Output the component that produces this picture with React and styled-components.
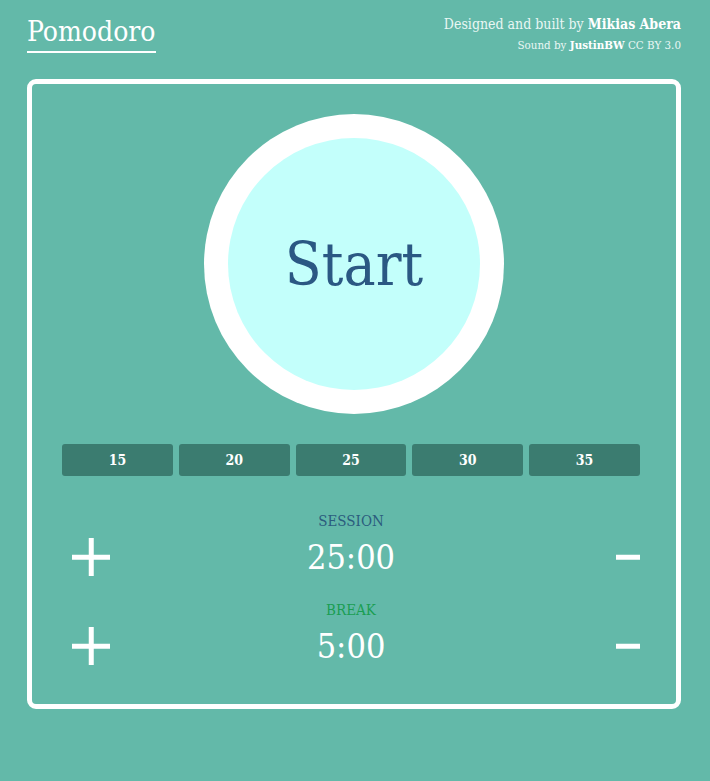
import React, { useState } from 'react';
import styled, { createGlobalStyle } from 'styled-components';

const GlobalStyle = createGlobalStyle`
  html, body {
    margin: 0;
    padding: 0;
    background: #63b9a9;
  }
  body {
    font-family: 'DejaVu Serif Condensed', 'DejaVu Serif', serif;
    color: #ffffff;
  }
`;

const Page = styled.div`
  width: 710px;
  height: 781px;
  box-sizing: border-box;
  padding: 14px 29px 0 27px;
  background: #63b9a9;
`;

const Header = styled.header`
  display: flex;
  justify-content: space-between;
  align-items: flex-start;
  height: 65px;
`;

const Title = styled.h1`
  margin: 0;
  font-size: 28px;
  font-weight: normal;
  line-height: 36px;
  padding-bottom: 1px;
  border-bottom: 2px solid #ffffff;
  color: #ffffff;
`;

const Credits = styled.div`
  text-align: right;
  color: #e9f7f4;
`;

const CreditLine = styled.div`
  font-size: ${(p) => p.size}px;
  line-height: ${(p) => p.lh}px;
  b {
    color: #ffffff;
  }
`;

const Frame = styled.main`
  height: 630px;
  box-sizing: border-box;
  border: 5px solid #ffffff;
  border-radius: 9px;
  padding: 30px 36px 0 30px;
  display: flex;
  flex-direction: column;
  align-items: center;
`;

const Ring = styled.div`
  width: 300px;
  height: 300px;
  border-radius: 50%;
  background: #ffffff;
  display: flex;
  align-items: center;
  justify-content: center;
  margin-left: 6px;
`;

const Dial = styled.button`
  width: 252px;
  height: 252px;
  border-radius: 50%;
  border: none;
  background: #c3fffb;
  color: #2b5883;
  font-family: inherit;
  font-size: 60px;
  padding: 0;
  cursor: pointer;
`;

const Presets = styled.div`
  display: grid;
  grid-template-columns: repeat(5, 1fr);
  gap: 6px;
  width: 578px;
  margin-top: 30px;
`;

const Preset = styled.button`
  height: 32px;
  border: none;
  border-radius: 3px;
  background: #3b7c70;
  color: #ffffff;
  font-family: inherit;
  font-weight: bold;
  font-size: 14px;
  cursor: pointer;
`;

const Settings = styled.div`
  width: 100%;
  margin-top: 36px;
  display: flex;
  flex-direction: column;
  gap: 17px;
`;

const Row = styled.div`
  display: grid;
  grid-template-columns: 80px 1fr 80px;
  align-items: end;
`;

const Stepper = styled.button`
  border: none;
  background: none;
  height: 54px;
  display: flex;
  align-items: center;
  padding: 0;
  cursor: pointer;
  justify-self: ${(p) => p.side};
  padding-left: ${(p) => (p.side === 'start' ? 10 : 0)}px;
`;

const Center = styled.div`
  display: flex;
  flex-direction: column;
  align-items: center;
`;

const Label = styled.div`
  font-size: 15px;
  line-height: 18px;
  color: ${(p) => p.color};
`;

const Time = styled.div`
  font-size: 34px;
  line-height: 54px;
  color: #ffffff;
`;

const PlusIcon = () => (
  <svg width="38" height="38" viewBox="0 0 38 38">
    <rect x="16.75" y="0" width="5" height="38" fill="#fff" />
    <rect x="0" y="16.75" width="38" height="5" fill="#fff" />
  </svg>
);

const MinusIcon = () => (
  <svg width="24" height="38" viewBox="0 0 24 38">
    <rect x="0" y="16.75" width="24" height="5" fill="#fff" />
  </svg>
);

const Setting = ({ label, color, value, onUp, onDown }) => (
  <Row>
    <Stepper side="start" onClick={onUp}>
      <PlusIcon />
    </Stepper>
    <Center>
      <Label color={color}>{label}</Label>
      <Time>{value}:00</Time>
    </Center>
    <Stepper side="end" onClick={onDown}>
      <MinusIcon />
    </Stepper>
  </Row>
);

export default function App() {
  const [session, setSession] = useState(25);
  const [brk, setBrk] = useState(5);

  return (
    <Page>
      <GlobalStyle />
      <Header>
        <Title>Pomodoro</Title>
        <Credits>
          <CreditLine size={14} lh={20}>
            Designed and built by <b>Mikias Abera</b>
          </CreditLine>
          <CreditLine size={11.5} lh={22}>
            Sound by <b>JustinBW</b> CC BY 3.0
          </CreditLine>
        </Credits>
      </Header>
      <Frame>
        <Ring>
          <Dial>Start</Dial>
        </Ring>
        <Presets>
          {[15, 20, 25, 30, 35].map((m) => (
            <Preset key={m} onClick={() => setSession(m)}>
              {m}
            </Preset>
          ))}
        </Presets>
        <Settings>
          <Setting
            label="SESSION"
            color="#2b5d7e"
            value={session}
            onUp={() => setSession(session + 1)}
            onDown={() => setSession(Math.max(1, session - 1))}
          />
          <Setting
            label="BREAK"
            color="#1a9e52"
            value={brk}
            onUp={() => setBrk(brk + 1)}
            onDown={() => setBrk(Math.max(1, brk - 1))}
          />
        </Settings>
      </Frame>
    </Page>
  );
}
